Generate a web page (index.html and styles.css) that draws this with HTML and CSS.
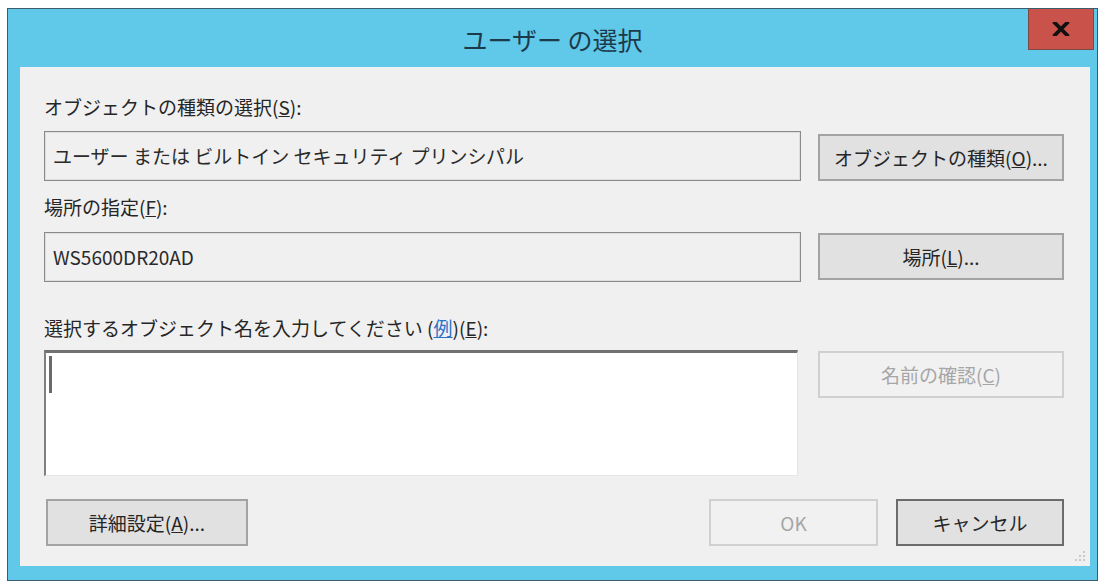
FILE: index.html
```html
<!DOCTYPE html>
<html lang="ja">
<head>
    <meta charset="UTF-8">
    <title>ユーザー の選択</title>
    <link rel="stylesheet" href="styles.css">
</head>
<body>
    <div class="window">
        <div class="titlebar">
            <span></span>
            <div class="title">ユーザー の選択</div>
            <div class="close">
                <svg width="18" height="14" viewBox="0 0 18 14">
                    <path d="M3 1 L15 13 M15 1 L3 13" stroke="#111" stroke-width="3.8" stroke-linecap="square"/>
                </svg>
            </div>
        </div>

        <div class="client">
            <div class="label first">オブジェクトの種類の選択(<u>S</u>):</div>
            <div class="row">
                <div class="field">ユーザー または ビルトイン セキュリティ プリンシパル</div>
                <div class="btn btn-side">オブジェクトの種類(<u>O</u>)...</div>
            </div>

            <div class="label second">場所の指定(<u>F</u>):</div>
            <div class="row">
                <div class="field">WS5600DR20AD</div>
                <div class="btn btn-side">場所(<u>L</u>)...</div>
            </div>

            <div class="label third">選択するオブジェクト名を入力してください (<a class="link">例</a>)(<u>E</u>):</div>
            <div class="row">
                <div class="names"><span class="caret"></span></div>
                <div class="btn btn-side disabled">名前の確認(<u>C</u>)</div>
            </div>

            <div class="footer">
                <div class="btn btn-advanced">詳細設定(<u>A</u>)...</div>
                <div class="footer-right">
                    <div class="btn btn-ok disabled">OK</div>
                    <div class="btn btn-cancel">キャンセル</div>
                </div>
            </div>

            <svg class="grip" width="12" height="12" viewBox="0 0 12 12">
                <rect x="9" y="1" width="2" height="2" fill="#c9c9c9"/>
                <rect x="5" y="5" width="2" height="2" fill="#c9c9c9"/>
                <rect x="9" y="5" width="2" height="2" fill="#c9c9c9"/>
                <rect x="1" y="9" width="2" height="2" fill="#c9c9c9"/>
                <rect x="5" y="9" width="2" height="2" fill="#c9c9c9"/>
                <rect x="9" y="9" width="2" height="2" fill="#c9c9c9"/>
            </svg>
        </div>
    </div>
</body>
</html>
```

FILE: styles.css
```css
* {
    margin: 0;
    padding: 0;
    box-sizing: border-box;
}

body {
    background: #fff;
    padding: 8px 9px 2px 7px;
    font-family: "Noto Sans CJK JP", "Noto Sans", sans-serif;
    color: #262626;
}

/* outer frame */
.window {
    height: 573px;
    border: 1px solid #3d5c6b;
    background: #60c8e9;
    display: flex;
    flex-direction: column;
}

.titlebar {
    height: 58px;
    display: grid;
    grid-template-columns: 1fr auto 1fr;
    align-items: start;
}

.title {
    padding-top: 14px;
    font-size: 25px;
    line-height: 33px;
    color: #1d3a4b;
}

.close {
    justify-self: end;
    margin-right: 3px;
    width: 66px;
    height: 41px;
    background: #c9524a;
    border: 1px solid #7e4843;
    border-top: none;
    display: flex;
    align-items: center;
    justify-content: center;
}

/* dialog body */
.client {
    position: relative;
    flex: 1;
    margin: 0 7px 14px 12px;
    background: #f0f0f0;
    padding: 27px 26px 0 24px;
    font-size: 19px;
}

.label {
    line-height: 26px;
    color: #262626;
}

.label.first {
    margin-bottom: 11px;
}

.label.second {
    margin-top: 13px;
    margin-bottom: 12px;
}

.label.third {
    margin-top: 33px;
    margin-bottom: 9px;
}

.link {
    color: #2a72c8;
    text-decoration: underline;
}

.row {
    display: grid;
    grid-template-columns: 1fr 246px;
    gap: 17px;
    align-items: start;
}

.field {
    height: 50px;
    border: 1px solid #8a8a8a;
    box-shadow: inset 0 0 0 1px #dedede;
    padding: 0 8px;
    line-height: 48px;
    color: #2a2a2a;
    white-space: nowrap;
}

.names {
    height: 126px;
    margin-right: 3px;
    background: #fff;
    border-top: 3px solid #707070;
    border-left: 2px solid #808080;
    border-right: 1px solid #e6e6e6;
    border-bottom: 1px solid #e6e6e6;
    padding: 3px 0 0 3px;
}

.caret {
    display: block;
    width: 3px;
    height: 37px;
    background: #6a6a6a;
}

.btn {
    height: 47px;
    background: #e1e1e1;
    border: 2px solid #a3a3a3;
    display: flex;
    align-items: center;
    justify-content: center;
    color: #262626;
    white-space: nowrap;
}

.btn-side {
    margin-top: 1px;
}

.row:nth-of-type(2) .btn-side {
    margin-top: 3px;
}

.btn.disabled {
    background: #f1f1f1;
    border-color: #d0d0d0;
    color: #a6a6a6;
}

.footer {
    margin-top: 23px;
    display: flex;
    justify-content: space-between;
    padding-left: 2px;
}

.footer-right {
    display: flex;
    gap: 18px;
}

.btn-advanced {
    width: 202px;
}

.btn-ok {
    width: 169px;
}

.btn-cancel {
    width: 168px;
    border-color: #6c6c6c;
}

.grip {
    position: absolute;
    right: 4px;
    bottom: 4px;
}
```
